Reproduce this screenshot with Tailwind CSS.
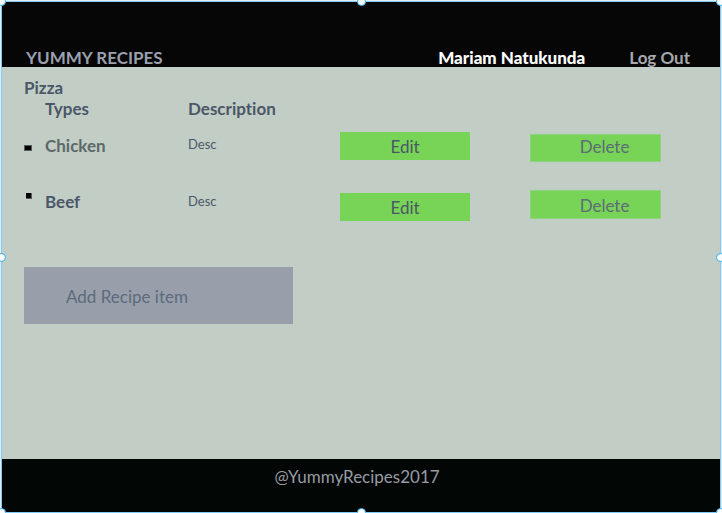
<!DOCTYPE html>
<html lang="en">
<head>
<meta charset="utf-8">
<meta name="viewport" content="width=device-width, initial-scale=1">
<title>Yummy Recipes</title>
<script src="https://cdn.jsdelivr.net/npm/@tailwindcss/browser@4"></script>
</head>
<body class="min-h-screen flex flex-col overflow-hidden bg-[#e6ebf3] pt-px px-px font-[Lato,sans-serif] text-[17px] leading-6 text-[#4b5768] [font-variant-ligatures:none]">
<div class="relative grow flex flex-col border border-[#7fccf9] bg-[#c2cec5]">
  <header class="h-[65px] shrink-0 flex items-end bg-[#060606] pl-6 pr-[30px] font-bold leading-[18px]">
    <h1 class="grow text-[#9aa0ad]">YUMMY RECIPES</h1>
    <span class="mr-11 font-black text-white">Mariam Natukunda</span>
    <a href="#" class="text-[#a7a9ae]">Log Out</a>
  </header>

  <main class="grow pl-[22px] pt-[9px]">
    <h2 class="font-bold h-[21px]">Pizza</h2>
    <table class="w-full table-fixed text-left">
      <colgroup>
        <col class="w-[21px]"><col class="w-[143px]"><col class="w-[152px]"><col class="w-[190px]"><col>
      </colgroup>
      <thead>
        <tr class="h-6 align-top">
          <td></td>
          <th scope="col" class="font-bold">Types</th>
          <th scope="col" class="font-bold">Description</th>
          <td></td><td></td>
        </tr>
      </thead>
      <tbody>
        <tr class="h-[58px] align-top">
          <td class="pt-6"><div class="w-2 h-1.5 border border-[#565c59] bg-black"></div></td>
          <td class="pt-[13px] font-bold text-[#5d6869]">Chicken</td>
          <td class="pt-[13px] text-[13px] leading-5">Desc</td>
          <td class="pt-[11px]"><button type="button" class="block w-[130px] h-7 pt-0.5 bg-[#78d456]">Edit</button></td>
          <td class="pt-[13px]"><button type="button" class="block w-[131px] h-7 pl-[18px] pb-0.5 border border-[#8ed47a] bg-[#78d456] text-[#5d6c78]">Delete</button></td>
        </tr>
        <tr class="h-[60px] align-top">
          <td class="pt-3.5 pl-0.5"><div class="size-1.5 bg-black border-r border-b border-[#565c59]"></div></td>
          <td class="pt-[11px] font-bold">Beef</td>
          <td class="pt-3 text-[13px] leading-5">Desc</td>
          <td class="pt-3.5"><button type="button" class="block w-[130px] h-7 pt-0.5 bg-[#78d456]">Edit</button></td>
          <td class="pt-[11px]"><button type="button" class="block w-[131px] h-[29px] pl-[18px] pt-0.5 border border-[#8ed47a] bg-[#78d456] text-[#5d6c78]">Delete</button></td>
        </tr>
      </tbody>
    </table>
    <button type="button" class="mt-7 block w-[269px] h-[57px] pl-[42px] pt-0.5 text-left bg-[#989fab] text-[#5c6b7b]">Add Recipe item</button>
  </main>

  <footer class="h-[53px] shrink-0 bg-[#020605] pt-1.5 pr-2 text-center text-[#989ba3]">@YummyRecipes2017</footer>

  <!-- Selection handles around the frame -->
  <i class="absolute -top-[5px] -left-[5px] size-[9px] rounded-full bg-white border border-[#2fabee]"></i>
  <i class="absolute -top-[5px] left-1/2 -ml-1 size-[9px] rounded-full bg-white border border-[#2fabee]"></i>
  <i class="absolute -top-[5px] -right-[5px] size-[9px] rounded-full bg-white border border-[#2fabee]"></i>
  <i class="absolute top-1/2 -mt-1 -left-[5px] size-[9px] rounded-full bg-white border border-[#2fabee]"></i>
  <i class="absolute top-1/2 -mt-1 -right-[5px] size-[9px] rounded-full bg-white border border-[#2fabee]"></i>
  <i class="absolute -bottom-[5px] -left-[5px] size-[9px] rounded-full bg-white border border-[#2fabee]"></i>
  <i class="absolute -bottom-[5px] left-1/2 -ml-1 size-[9px] rounded-full bg-white border border-[#2fabee]"></i>
  <i class="absolute -bottom-[5px] -right-[5px] size-[9px] rounded-full bg-white border border-[#2fabee]"></i>
</div>
</body>
</html>
